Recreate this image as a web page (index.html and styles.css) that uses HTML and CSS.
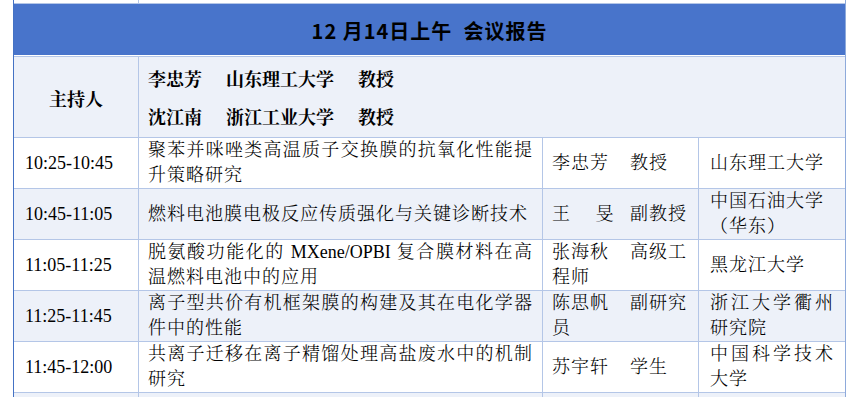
FILE: index.html
```html
<!DOCTYPE html>
<html lang="zh-CN">
<head>
<meta charset="utf-8">
<title>会议报告</title>
<link rel="stylesheet" href="styles.css">
</head>
<body>
<div class="sheet">
  <div class="row strip">
    <div class="c"></div>
    <div class="c span3"></div>
  </div>
  <div class="row head">
    <div class="head-cell">12 月14日上午&nbsp; 会议报告</div>
  </div>
  <div class="row host alt">
    <div class="c center"><div class="t host-label">主持人</div></div>
    <div class="c span3 pad-title">
      <div class="t host-list">
        <div class="host-line"><span class="h-name">李忠芳</span><span class="h-org">山东理工大学</span><span>教授</span></div>
        <div class="host-line"><span class="h-name">沈江南</span><span class="h-org">浙江工业大学</span><span>教授</span></div>
      </div>
    </div>
  </div>
  <div class="row">
    <div class="c pad-time"><div class="t time">10:25-10:45</div></div>
    <div class="c pad-title"><div class="t title">聚苯并咪唑类高温质子交换膜的抗氧化性能提升策略研究</div></div>
    <div class="c pad-person"><div class="t person"><span class="p-name">李忠芳</span>教授</div></div>
    <div class="c pad-org last"><div class="t org">山东理工大学</div></div>
  </div>
  <div class="row alt">
    <div class="c pad-time"><div class="t time">10:45-11:05</div></div>
    <div class="c pad-title"><div class="t title">燃料电池膜电极反应传质强化与关键诊断技术</div></div>
    <div class="c pad-person"><div class="t person"><span class="p-name">王　 旻</span>副教授</div></div>
    <div class="c pad-org last"><div class="t org left">中国石油大学（华东）</div></div>
  </div>
  <div class="row">
    <div class="c pad-time"><div class="t time">11:05-11:25</div></div>
    <div class="c pad-title"><div class="t title">脱氨酸功能化的 <span class="latin">MXene/OPBI</span> 复合膜材料在高温燃料电池中的应用</div></div>
    <div class="c pad-person"><div class="t person"><span class="p-name">张海秋</span>高级工程师</div></div>
    <div class="c pad-org last"><div class="t org">黑龙江大学</div></div>
  </div>
  <div class="row alt">
    <div class="c pad-time"><div class="t time">11:25-11:45</div></div>
    <div class="c pad-title"><div class="t title">离子型共价有机框架膜的构建及其在电化学器件中的性能</div></div>
    <div class="c pad-person"><div class="t person"><span class="p-name">陈思帆</span>副研究员</div></div>
    <div class="c pad-org last"><div class="t org">浙江大学衢州研究院</div></div>
  </div>
  <div class="row">
    <div class="c pad-time"><div class="t time">11:45-12:00</div></div>
    <div class="c pad-title"><div class="t title">共离子迁移在离子精馏处理高盐废水中的机制研究</div></div>
    <div class="c pad-person"><div class="t person"><span class="p-name">苏宇轩</span>学生</div></div>
    <div class="c pad-org last"><div class="t org">中国科学技术大学</div></div>
  </div>
  <div class="row alt tail">
    <div class="c"></div>
    <div class="c"></div>
    <div class="c"></div>
    <div class="c last"></div>
  </div>
</div>
</body>
</html>
```

FILE: styles.css
```css
* {
  box-sizing: border-box;
}

html, body {
  margin: 0;
  padding: 0;
  background: #ffffff;
}

body {
  font-family: "Liberation Serif", "Noto Serif CJK SC", "Noto Sans CJK SC", serif;
  font-size: 18px;
  color: #000000;
}

.sheet {
  margin-left: 13px;
  width: 833px;
  border-left: 1px solid #4472c4;
  border-right: 1px solid #8eaadb;
}

.row {
  display: grid;
  grid-template-columns: 125px 404px 156px 146px;
  height: 51px;
  border-bottom: 1px solid #b4c6e7;
  background: #ffffff;
}

.row.alt {
  background: #edf1f9;
}

.row.strip {
  height: 4px;
}

.row.head {
  display: block;
  height: 53px;
}

.row.host {
  height: 81px;
}

.row.tail {
  height: 4px;
  border-bottom: none;
}

.c {
  display: flex;
  align-items: center;
  border-right: 1px solid #b4c6e7;
  min-width: 0;
}

.c.last,
.c.span3 {
  border-right: none;
}

.span3 {
  grid-column: 2 / 5;
}

.t {
  width: 100%;
  line-height: 25px;
}

.center .t {
  text-align: center;
}

.head-cell {
  height: 52px;
  background: #4874cb;
  border-bottom: 1px solid #ffffff;
  display: flex;
  align-items: center;
  justify-content: center;
  font-family: "Noto Sans CJK SC", "Noto Sans", sans-serif;
  font-weight: 700;
  font-size: 20px;
  letter-spacing: 1px;
  padding-top: 1px;
}

.host-label {
  font-family: "Noto Serif CJK SC", "Noto Sans CJK SC", serif;
  font-weight: 700;
  padding-top: 2px;
}

.host-list {
  font-family: "Noto Serif CJK SC", "Noto Sans CJK SC", serif;
  font-weight: 700;
}

.host-line {
  line-height: 38px;
}

.h-name {
  display: inline-block;
  width: 78px;
}

.h-org {
  display: inline-block;
  width: 132px;
}

.pad-time {
  padding-left: 11px;
}

.pad-title {
  padding: 0 9px 0 9px;
}

.pad-person {
  padding: 0 10px 0 9px;
}

.pad-org {
  padding: 0 11px 0 11px;
}

.title,
.person,
.org {
  letter-spacing: 1px;
  font-weight: 300;
}

.title {
  text-align: justify;
}

.latin {
  letter-spacing: 0;
  font-weight: 400;
}

.p-name {
  display: inline-block;
  width: 78px;
}

.org {
  text-align: justify;
}

.org.left {
  text-align: left;
}
```
